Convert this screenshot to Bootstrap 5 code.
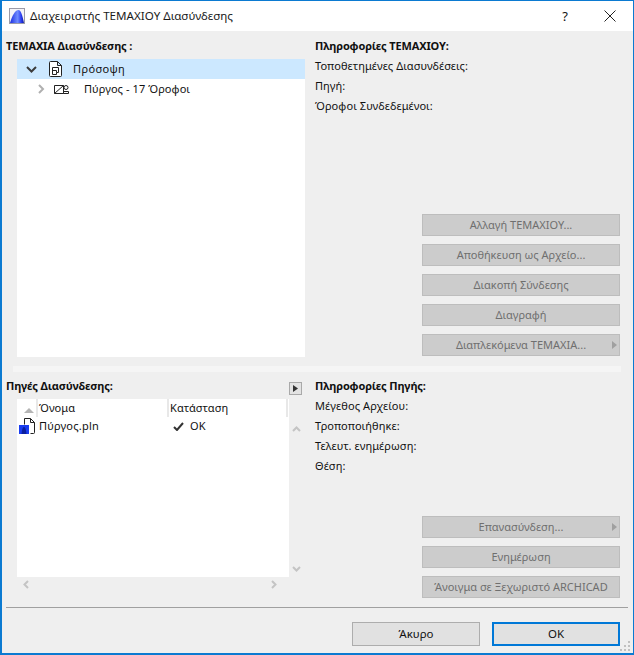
<!DOCTYPE html>
<html lang="el">
<head>
<meta charset="utf-8">
<title>Διαχειριστής ΤΕΜΑΧΙΟΥ Διασύνδεσης</title>
<link href="https://cdn.jsdelivr.net/npm/bootstrap@5.3.0/dist/css/bootstrap.min.css" rel="stylesheet">
<style>
html,body{margin:0;height:100%;background:#efefef;overflow:hidden}
body{font-family:"Noto Sans","Open Sans",sans-serif;font-size:11px;color:#111;line-height:20px;letter-spacing:.08px}
.dlg{width:634px;height:655px;border:1px solid #0b7ad1;border-width:1px 1px 2px 2px;background:#efefef;overflow:hidden}
.ttl{height:30px;background:#fff;padding-left:7px;padding-right:17px;font-size:11.6px;letter-spacing:0}
.ttl-text{margin-left:5px;color:#1a1a1a}
.help{width:14px;text-align:center;font-size:13px;margin-right:32px;margin-left:-12px}
.sec{padding-left:4px;padding-right:13px}
.sec-top{height:335px;padding-top:5px}
.sec-low{height:235px;padding-top:4px}
.col-left-top{width:299px}
.col-left-low{width:299px}
.lbl{font-weight:700;height:20px;letter-spacing:-.15px}
.lbl-a{margin-bottom:3px}
.tree{margin-left:11px;width:288px;height:298px;background:#fff}
.tree-row{height:20px}
.tree-sel{background:#cce8ff;padding-left:9px}
.tree-sub{padding-left:21px}
.tree-sel .doc{margin-left:12px}
.tree-sel .tree-name{margin-left:11px;letter-spacing:.4px}
.tree-sub .view{margin-left:9px}
.tree-sub .tree-name{margin-left:15px}
.right-col{margin-left:10px;width:305px}
.stack{width:198px;margin-left:auto}
.stack-top{margin-top:98px}
.stack-low{margin-top:40px}
.flat{height:22px;background:#ccc;border:1px solid #bdbdbd;color:#6f6f6f;border-radius:0;font-size:11px;line-height:20px;padding:0;text-align:center;position:relative;letter-spacing:0}
.flat:disabled{opacity:1;color:#6f6f6f;background:#ccc;border-color:#bdbdbd}
.tri{position:absolute;right:2px;top:6px}
.band{height:6px;margin-left:11px;margin-right:12px;background:#f5f5f5}
.toggle{width:13px;height:13px;border:1px solid #a9a9a9;background:#e3e3e3;margin-right:3px;margin-top:6px}
.lbl-row{height:23px}
.list-wrap{margin-left:11px}
.lst{width:272px;height:178px;background:#fff}
.lst-head{height:18px;width:271px;line-height:18px}
.hc{height:18px;border-right:2px solid #e8e8e8;padding-left:1px}
.hc-a{width:21px;padding:0 0 0 7px}
.hc-b{width:131px}
.hc-c{width:119px}
.lst-row{height:18px;line-height:18px}
.lst-file{width:22px;padding-left:2px}
.lst-name{width:130px;letter-spacing:.2px}
.lst-check{margin-left:4px;margin-right:6px}
.vs{width:14px;padding:7px 0 5px 3px}
.hs{width:272px;height:14px;padding:0 5px}
.rule{height:1px;background:#a0a0a0;margin:0 5px 0 4px}
.foot{padding-top:14px;padding-right:13px}
.act{height:24px;width:128px;background:#e1e1e1;border:1px solid #adadad;border-radius:0;font-size:11.5px;line-height:20px;padding:0;color:#111}
.act:hover{background:#e1e1e1}
.act-ok{border:2px solid #0078d7;margin-left:12px}
.grip{position:absolute;right:2px;bottom:1px}
.dlg-box{position:relative}
</style>
</head>
<body>
<div class="dlg dlg-box d-flex flex-column">
  <div class="ttl d-flex align-items-center flex-shrink-0">
    <svg width="16" height="16" viewBox="0 0 16 16"><defs><linearGradient id="g" x1="0" x2="1" y1="0" y2="0"><stop offset="0" stop-color="#1c2ee0"/><stop offset=".55" stop-color="#6f8cff"/><stop offset=".8" stop-color="#2a3cf0"/><stop offset="1" stop-color="#0c1a9a"/></linearGradient></defs><rect x=".5" y=".5" width="15" height="15" fill="#f4f4f8" stroke="#9b9ba8"/><path d="M1 15C3 8 6 2 9.500 2c2.500 0 4 6 5.500 13z" fill="url(#g)"/></svg>
    <span class="ttl-text flex-grow-1">Διαχειριστής ΤΕΜΑΧΙΟΥ Διασύνδεσης</span>
    <span class="help">?</span>
    <svg width="12" height="12" viewBox="0 0 12 12"><path d="M.5.500l11 11M11.500.500l-11 11" stroke="#222" fill="none"/></svg>
  </div>

  <div class="sec sec-top d-flex flex-shrink-0">
    <div class="col-left-top">
      <div class="lbl lbl-a">ΤΕΜΑΧΙΑ Διασύνδεσης :</div>
      <div class="tree">
        <div class="tree-row tree-sel d-flex align-items-center">
          <svg width="11" height="7" viewBox="0 0 11 7"><path d="M1 1l4.500 4.500L10 1" fill="none" stroke="#3c3c3c" stroke-width="2"/></svg>
          <svg class="doc" width="13" height="16" viewBox="0 0 13 16"><path d="M1.500.500h7l4 4v10a1 1 0 0 1-1 1h-10a1 1 0 0 1-1-1v-13a1 1 0 0 1 1-1zM8.500.500v4h4" fill="#fff" stroke="#222"/><path d="M3.500 6.500h6v5h-2v2h-4zM3.500 9.500h4v2" fill="none" stroke="#222"/></svg>
          <span class="tree-name">Πρόσοψη</span>
        </div>
        <div class="tree-row tree-sub d-flex align-items-center">
          <svg width="7" height="10" viewBox="0 0 7 10"><path d="M1 1l4 4-4 4" fill="none" stroke="#b0b0b0" stroke-width="2"/></svg>
          <svg class="view" width="15" height="9" viewBox="0 0 15 9"><path d="M.5.500h9v8h-9zM.5 8.500l9-8" fill="none" stroke="#222"/><circle cx="12" cy="2.500" r="2" fill="none" stroke="#222"/><path d="M9.500 8.500v-2h5v2z" fill="none" stroke="#222"/></svg>
          <span class="tree-name">Πύργος - 17 Όροφοι</span>
        </div>
      </div>
    </div>
    <div class="right-col">
      <div class="lbl">Πληροφορίες ΤΕΜΑΧΙΟΥ:</div>
      <div>Τοποθετημένες Διασυνδέσεις:</div>
      <div>Πηγή:</div>
      <div>Όροφοι Συνδεδεμένοι:</div>
      <div class="stack stack-top d-flex flex-column gap-2">
        <button class="btn flat" disabled>Αλλαγή ΤΕΜΑΧΙΟΥ...</button>
        <button class="btn flat" disabled>Αποθήκευση ως Αρχείο...</button>
        <button class="btn flat" disabled>Διακοπή Σύνδεσης</button>
        <button class="btn flat" disabled>Διαγραφή</button>
        <button class="btn flat" disabled>Διαπλεκόμενα ΤΕΜΑΧΙΑ...<svg class="tri" width="5" height="8" viewBox="0 0 5 8"><path d="M0 0l5 4-5 4z" fill="#a0a0a0"/></svg></button>
      </div>
    </div>
  </div>

  <div class="band flex-shrink-0"></div>

  <div class="sec sec-low d-flex flex-shrink-0">
    <div class="col-left-low">
      <div class="lbl-row d-flex justify-content-between">
        <span class="lbl">Πηγές Διασύνδεσης:</span>
        <span class="toggle d-flex align-items-center justify-content-center"><svg width="5" height="7" viewBox="0 0 5 7"><path d="M0 0l5 3.500-5 3.500z" fill="#333"/></svg></span>
      </div>
      <div class="list-wrap d-flex">
        <div class="lst">
          <div class="lst-head d-flex">
            <div class="hc hc-a d-flex align-items-end pb-1"><svg width="10" height="5" viewBox="0 0 10 5"><path d="M5 0l5 5H0z" fill="#b4b4b4"/></svg></div>
            <div class="hc hc-b">Όνομα</div>
            <div class="hc hc-c">Κατάσταση</div>
          </div>
          <div class="lst-row d-flex align-items-center">
            <div class="lst-file d-flex">
              <svg width="16" height="16" viewBox="0 0 16 16"><path d="M5.500.500h6l4 4v10a1 1 0 0 1-1 1h-3M5.500.500v6M11.500.500v4h4" fill="#fff" stroke="#222"/><rect y="7" width="10" height="9" fill="#1a3df0"/><path d="M2.500 16c.5-4 1-7 2.500-7s2 3 2.500 7z" fill="#0b1f9e"/></svg>
            </div>
            <div class="lst-name">Πύργος.pln</div>
            <svg class="lst-check" width="11" height="9" viewBox="0 0 11 9"><path d="M1 5l3 3 6-7" fill="none" stroke="#333" stroke-width="2"/></svg>
            <span>OK</span>
          </div>
        </div>
        <div class="vs d-flex flex-column justify-content-between">
          <div class="pt-3"><svg class="d-block mt-1" width="9" height="6" viewBox="0 0 9 6"><path d="M1 5l3.500-3.500L8 5" fill="none" stroke="#c4c4c4" stroke-width="2"/></svg></div>
          <svg width="9" height="6" viewBox="0 0 9 6"><path d="M1 1l3.500 3.500L8 1" fill="none" stroke="#c4c4c4" stroke-width="2"/></svg>
        </div>
      </div>
      <div class="hs ms-2 d-flex justify-content-between align-items-center">
        <svg class="ms-1" width="6" height="9" viewBox="0 0 6 9"><path d="M5 1L1.500 4.500 5 8" fill="none" stroke="#c4c4c4" stroke-width="2"/></svg>
        <svg class="me-1" width="6" height="9" viewBox="0 0 6 9"><path d="M1 1l3.500 3.500L1 8" fill="none" stroke="#c4c4c4" stroke-width="2"/></svg>
      </div>
    </div>
    <div class="right-col">
      <div class="lbl">Πληροφορίες Πηγής:</div>
      <div>Μέγεθος Αρχείου:</div>
      <div>Τροποποιήθηκε:</div>
      <div>Τελευτ. ενημέρωση:</div>
      <div>Θέση:</div>
      <div class="stack stack-low d-flex flex-column gap-2">
        <button class="btn flat" disabled>Επανασύνδεση...<svg class="tri" width="5" height="8" viewBox="0 0 5 8"><path d="M0 0l5 4-5 4z" fill="#a0a0a0"/></svg></button>
        <button class="btn flat" disabled>Ενημέρωση</button>
        <button class="btn flat" disabled>Άνοιγμα σε Ξεχωριστό ARCHICAD</button>
      </div>
    </div>
  </div>

  <div class="rule flex-shrink-0"></div>
  <div class="foot d-flex justify-content-end">
    <button class="btn act">Άκυρο</button>
    <button class="btn act act-ok">OK</button>
  </div>
  <svg class="grip" width="11" height="11" viewBox="0 0 11 11"><g fill="#c0c0c0"><rect x="8" y="0" width="2" height="2"/><rect x="4" y="4" width="2" height="2"/><rect x="8" y="4" width="2" height="2"/><rect x="0" y="8" width="2" height="2"/><rect x="4" y="8" width="2" height="2"/><rect x="8" y="8" width="2" height="2"/></g></svg>
</div>
<script src="https://cdn.jsdelivr.net/npm/bootstrap@5.3.0/dist/js/bootstrap.bundle.min.js"></script>
</body>
</html>
